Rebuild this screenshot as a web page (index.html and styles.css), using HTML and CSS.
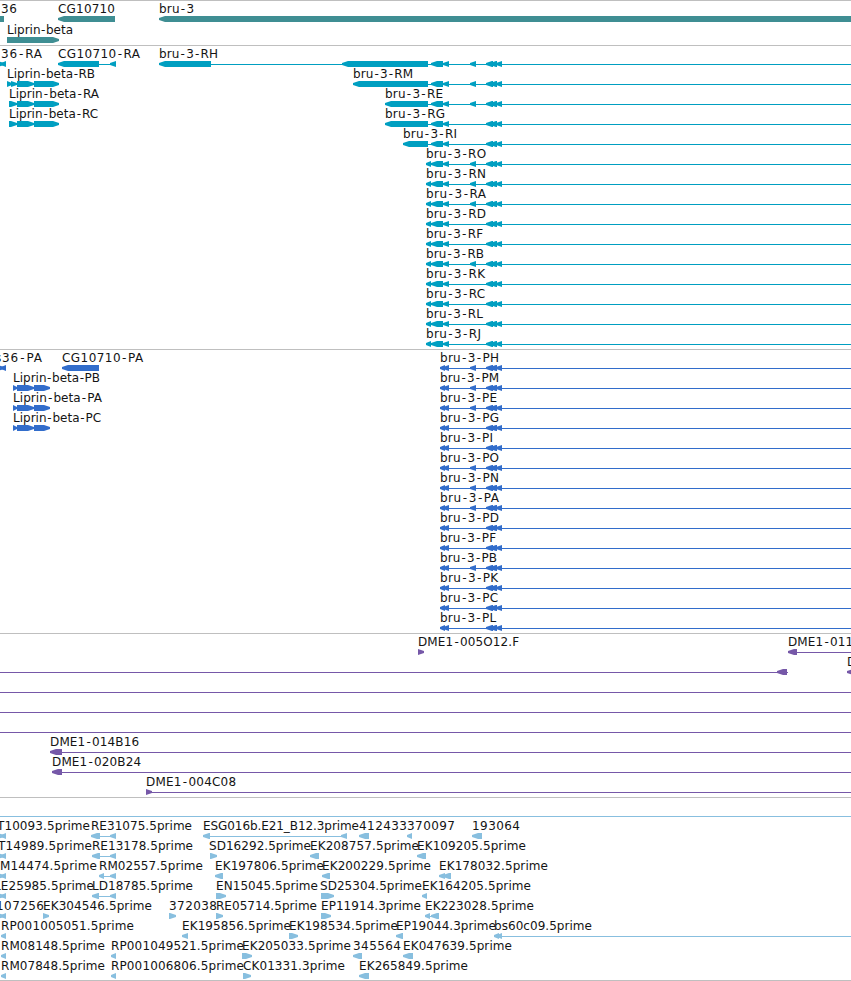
FILE: index.html
```html
<!DOCTYPE html>
<html lang="en">
<head>
<meta charset="utf-8">
<title>Genome browser</title>
<link rel="stylesheet" href="styles.css">
</head>
<body>
<main class="browser" id="browser"></main>
<script src="tracks.js"></script>
</body>
</html>
```
FILE: styles.css
```css
body {
  margin: 0;
  background: #fff;
  overflow: hidden;
}

.browser {
  display: flex;
  flex-direction: column;
  width: 851px;
  overflow: hidden;
  border-bottom: 1px solid #bfbfbf;
}

.track {
  display: flex;
  flex-direction: column;
  border-top: 1px solid #bfbfbf;
  padding-bottom: 3px;
}

.row {
  display: block;
  width: 851px;
  height: 20px;
  overflow: visible;
}

.row text {
  fill: #141414;
  font: 12px "DejaVu Sans", sans-serif;
}

.genes { color: #3f8e93; padding-bottom: 2px; }
.genes .row { height: 21px; }
.transcripts { color: #009fc1; }
.proteins { color: #326dcb; }
.clones { color: #7658a8; }
.ests { color: #88bfdf; padding-bottom: 2px; }

.shape { fill: currentColor; }
```
FILE: tracks.js
```js
const END = 851;

// Feature: label, label start, label end, glyphs.
// Glyph: [kind, start, end] with kind L / R (arrows), B (block), - (line).
const f = (label, x, end, ...glyphs) => ({ label, x, end, glyphs });
const line = () => [f('', 0, 0, ['-', 0, END])];

const exonTail = (extra) => [
  ...(extra ? [['L', 470, 476]] : []),
  ['L', 486, 493], ['L', 490, 497], ['L', 496, 502]
];
const transcript = (name, x, end, first, extra) => f('bru-3-' + name, x, end,
  ['-', first[0][1], END], ...first, ['L', 431, 443], ['L', 443, 449], ...exonTail(extra));
const shortTranscript = (name, end, extra) =>
  [transcript(name, 426, end, [['L', 426, 431]], extra)];
const protein = (name, end, extra) => f('bru-3-' + name, 440, end,
  ['-', 440, END], ['L', 440, 445], ['L', 443, 449], ...exonTail(extra));
const edge = [['R', -2, 4], ['L', 1, 6]];

const tracks = {
  genes: [
    [f('36', 1, 17, ['B', 0, 4]), f('CG10710', 58, 115, ['L', 58, 115]), f('bru-3', 159, 194, ['L', 159, END + 10])],
    [f('Liprin-beta', 7, 73, ['R', 7, 59])]
  ],
  transcripts: [
    [f('36-RA', 1, 42, ...edge),
     f('CG10710-RA', 58, 140, ['-', 58, 115], ['L', 58, 99], ['L', 110, 116]),
     transcript('RH', 159, 218, [['L', 159, 211], ['L', 342, 428]], true)],
    [f('Liprin-beta-RB', 7, 95, ['R', 7, 12], ['R', 11, 17], ['R', 17, 34], ['R', 34, 59]),
     transcript('RM', 353, 413, [['L', 353, 428]], true)],
    [f('Liprin-beta-RA', 9, 99, ['R', 9, 17], ['R', 17, 34], ['R', 34, 59]),
     transcript('RE', 385, 443, [['L', 385, 428]], true)],
    [f('Liprin-beta-RC', 9, 98, ['R', 9, 17], ['R', 17, 34], ['R', 34, 59]),
     transcript('RG', 385, 445, [['L', 385, 428]], false)],
    [transcript('RI', 403, 457, [['L', 403, 428]], false)],
    shortTranscript('RO', 486, true), shortTranscript('RN', 486, true),
    shortTranscript('RA', 486, true), shortTranscript('RD', 486, false),
    shortTranscript('RF', 483, false), shortTranscript('RB', 484, true),
    shortTranscript('RK', 485, false), shortTranscript('RC', 485, false),
    shortTranscript('RL', 483, false), shortTranscript('RJ', 481, false)
  ],
  proteins: [
    [f('s36-PA', -5, 42, ...edge), f('CG10710-PA', 62, 143, ['L', 62, 99]), protein('PH', 499, true)],
    [f('Liprin-beta-PB', 13, 100, ['R', 13, 17], ['R', 17, 34], ['R', 34, 50]), protein('PM', 499, true)],
    [f('Liprin-beta-PA', 13, 102, ['R', 13, 17], ['R', 17, 34], ['R', 34, 50]), protein('PE', 497, true)],
    [f('Liprin-beta-PC', 13, 101, ['R', 13, 17], ['R', 17, 34], ['R', 34, 50]), protein('PG', 499, false)],
    [protein('PI', 493, false)], [protein('PO', 499, true)],
    [protein('PN', 499, true)], [protein('PA', 499, true)],
    [protein('PD', 499, false)], [protein('PF', 496, false)],
    [protein('PB', 497, true)], [protein('PK', 498, false)],
    [protein('PC', 498, false)], [protein('PL', 496, false)]
  ],
  clones: [
    [f('DME1-005O12.F', 418, 519, ['R', 418, 424]),
     f('DME1-011', 788, 853, ['-', 788, END], ['L', 788, 797])],
    [f('', 0, 0, ['-', 0, 788], ['L', 777, 787]), f('D', 847, 857, ['L', 847, 857])],
    line(), line(), line(),
    [f('DME1-014B16', 50, 139, ['-', 50, END], ['L', 50, 62])],
    [f('DME1-020B24', 52, 141, ['-', 52, END], ['L', 52, 62])],
    [f('DME1-004C08', 146, 236, ['-', 146, END], ['R', 146, 152])]
  ],
  ests: [
    line(),
    [f('T10093.5prime', -3, 90, ...edge),
     f('RE31075.5prime', 91, 192, ['-', 91, 115], ['L', 91, 100], ['L', 110, 116]),
     f('ESG016b.E21_B12.3prime', 203, 359, ['-', 203, 347], ['L', 203, 210], ['L', 341, 347]),
     f('412433', 359, 407, ['L', 359, 369]), f('370097', 407, 455, ['L', 407, 412]),
     f('193064', 472, 520, ['L', 472, 482])],
    [f('T14989.5prime', -2, 92, ...edge),
     f('RE13178.5prime', 92, 193, ['-', 92, 115], ['L', 92, 100], ['L', 110, 116]),
     f('SD16292.5prime', 209, 311, ['R', 210, 217]),
     f('EK208757.5prime', 310, 419, ['L', 310, 319]),
     f('EK109205.5prime', 417, 526, ['L', 417, 426])],
    [f('M14474.5prime', 0, 97, ...edge),
     f('RM02557.5prime', 99, 203, ['-', 99, 115], ['L', 99, 104], ['L', 110, 116]),
     f('EK197806.5prime', 215, 324, ['L', 215, 223]),
     f('EK200229.5prime', 322, 431, ['L', 322, 330]),
     f('EK178032.5prime', 439, 548, ['L', 439, 445], ['L', 443, 451])],
    [f('LE25985.5prime', -6, 94, ...edge),
     f('LD18785.5prime', 92, 193, ['-', 92, 115], ['L', 92, 99], ['L', 110, 116]),
     f('EN15045.5prime', 216, 318, ['R', 216, 226]),
     f('SD25304.5prime', 320, 422, ['R', 321, 334]),
     f('EK164205.5prime', 422, 531, ['L', 422, 427])],
    [f('107256', -4, 44, ...edge),
     f('EK304546.5prime', 43, 152, ['R', 43, 49]),
     f('372038', 169, 217, ['R', 169, 176]),
     f('RE05714.5prime', 216, 317, ['R', 216, 223]),
     f('EP11914.3prime', 321, 421, ['R', 321, 331]),
     f('EK223028.5prime', 425, 534, ['-', 425, 439], ['L', 425, 430], ['L', 431, 439])],
    [f('RP001005051.5prime', 1, 134, ['L', 1, 6]),
     f('EK195856.5prime', 182, 291, ['L', 182, 188]),
     f('EK198534.5prime', 289, 398, ['R', 289, 298]),
     f('EP19044.3prime', 396, 496, ['L', 396, 403]),
     f('bs60c09.5prime', 494, 592, ['-', 494, END], ['L', 494, 499], ['L', 497, 502])],
    [f('RM08148.5prime', 1, 105, ['L', 1, 6]),
     f('RP001049521.5prime', 111, 244, ['L', 111, 116]),
     f('EK205033.5prime', 242, 351, ['R', 242, 252]),
     f('345564', 353, 401, ['L', 353, 362]),
     f('EK047639.5prime', 403, 512, ['L', 403, 413])],
    [f('RM07848.5prime', 1, 105, ['L', 1, 6]),
     f('RP001006806.5prime', 111, 244, ['L', 111, 116]),
     f('CK01331.3prime', 243, 345, ['R', 243, 251]),
     f('EK265849.5prime', 359, 468, ['L', 359, 369])]
  ]
};

function glyph([kind, a, b]) {
  if (kind === '-') return `<rect class="shape" x="${a}" y="18" width="${b - a}" height="1"/>`;
  if (kind === 'B') return `<rect class="shape" x="${a}" y="15" width="${b - a}" height="6"/>`;
  const head = Math.min(6, b - a);
  const tip = kind === 'L' ? a : b;
  const back = kind === 'L' ? b : a;
  const neck = kind === 'L' ? a + head : b - head;
  return `<polygon class="shape" points="${tip},17 ${neck},15 ${back},15 ${back},21 ${neck},21 ${tip},19"/>`;
}

const root = document.getElementById('browser');
for (const [name, rows] of Object.entries(tracks)) {
  const section = document.createElement('section');
  section.className = 'track ' + name;
  section.innerHTML = rows.map(row => '<svg class="row">' + row.map(item =>
    item.glyphs.map(glyph).join('') +
    (item.label ? `<text x="${item.x}" y="12" data-width="${item.end - item.x}">${item.label}</text>` : '')
  ).join('') + '</svg>').join('');
  root.appendChild(section);
}

// Fit each label to its width: the hyphens take up to 1.1px on each side,
// and the rest is shared by all the letters.
for (const text of document.querySelectorAll('text')) {
  const label = text.textContent;
  const width = Number(text.dataset.width);
  const hyphens = label.split('-').length - 1;
  if (!hyphens) {
    text.setAttribute('textLength', width);
    continue;
  }
  const slack = width - text.getComputedTextLength();
  const gap = Math.min(1.1, slack / (2 * hyphens));
  const rest = (slack - gap * 2 * hyphens) / (label.length - 1);
  text.setAttribute('dx', [...label].map((c, i) => {
    const atHyphen = c === '-' || label[i - 1] === '-';
    return ((i ? rest : 0) + (atHyphen ? gap : 0)).toFixed(2);
  }).join(' '));
}
```
